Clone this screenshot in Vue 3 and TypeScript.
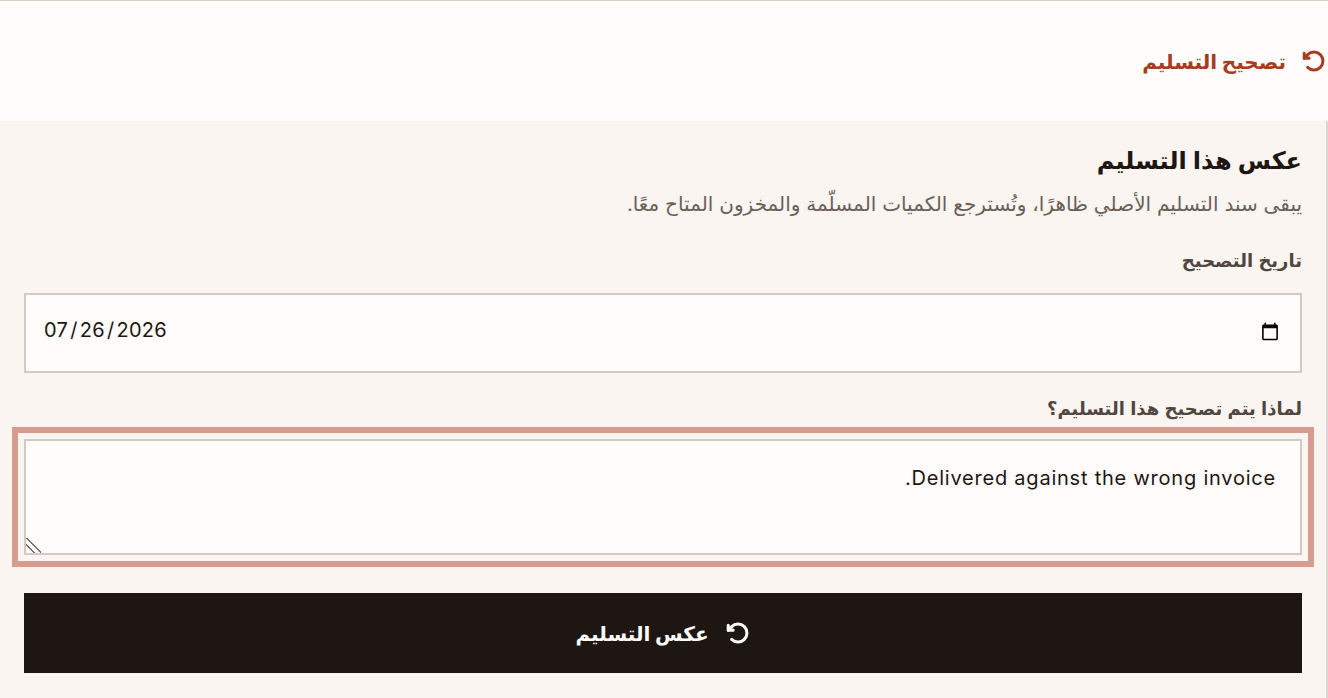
<script setup lang="ts">
const note = 'Delivered against the wrong invoice.'
const date = '2026-07-26'
</script>

<template>
  <div class="page" dir="rtl">
    <header class="top">
      <button class="link" type="button">
        <svg class="ic" viewBox="0 0 256 256" aria-hidden="true"><polyline points="79.8 99.7 31.8 99.7 31.8 51.7" /><path d="M65.8 190.2a88 88 0 1 0 0-124.4L31.8 99.7" /></svg>
        <span class="txt">تصحيح التسليم</span>
      </button>
    </header>
    <section class="panel">
      <h2>عكس هذا التسليم</h2>
      <p class="sub">يبقى سند التسليم الأصلي ظاهرًا، وتُسترجع الكميات المسلّمة والمخزون المتاح معًا.</p>
      <label class="lab" for="d">تاريخ التصحيح</label>
      <input id="d" class="field date" type="date" :value="date" />
      <label class="lab second" for="r">لماذا يتم تصحيح هذا التسليم؟</label>
      <textarea id="r" class="field area" :value="note"></textarea>
      <button class="submit" type="button">
        <svg class="ic" viewBox="0 0 256 256" aria-hidden="true"><polyline points="79.8 99.7 31.8 99.7 31.8 51.7" /><path d="M65.8 190.2a88 88 0 1 0 0-124.4L31.8 99.7" /></svg>
        <span class="txt">عكس التسليم</span>
      </button>
    </section>
  </div>
</template>

<style>
html, body { margin: 0; background: #faf5f0; overflow: hidden; }
</style>

<style scoped>
.page {
  zoom: 2;
  font-family: Inter, "DejaVu Sans", sans-serif;
  font-optical-sizing: none;
  color: #1e1613;
  height: 349px;
  background: #faf5f0;
}
.top {
  height: 60px;
  box-sizing: content-box;
  border-top: 0.5px solid #dccfc4;
  background: #fffcfb;
  display: flex;
  align-items: center;
}
.link {
  display: flex;
  align-items: center;
  gap: 7.5px;
  padding: 0;
  margin-right: 0.5px;
  border: 0;
  background: none;
  color: #a63d20;
  font: 700 10px Inter, "DejaVu Sans", sans-serif;
}
.txt { padding-top: 1px; }
.ic {
  width: 13px;
  height: 13px;
  fill: none;
  stroke: currentColor;
  stroke-width: 30;
  stroke-linecap: round;
  stroke-linejoin: round;
  flex: none;
}
.panel {
  display: flex;
  flex-direction: column;
  padding: 12px 12px 0;
  border-right: 1px solid #dcd6d0;
  height: 288.5px;
  box-sizing: border-box;
}
h2 {
  margin: 0;
  font-size: 12px;
  line-height: 16px;
  font-weight: 700;
  word-spacing: 0.25px;
}
.sub {
  margin: 6px 0 0;
  font-size: 10px;
  line-height: 15px;
  color: #6b5f58;
  word-spacing: 0.14px;
}
.lab {
  margin-top: 14px;
  font-size: 9px;
  line-height: 14px;
  font-weight: 700;
  color: #51453f;
  word-spacing: 0.5px;
}
.second { margin-top: 11px; }
.field {
  box-sizing: border-box;
  width: 100%;
  margin: 0;
  border: 1px solid #d2c9c2;
  background: #fffcfb;
  color: #1e1613;
  border-radius: 0;
  font: 400 10px Inter, "DejaVu Sans", sans-serif;
  font-optical-sizing: none;
}
.date {
  height: 40px;
  margin-top: 9px;
  padding: 0 8px 1px;
  letter-spacing: 0.15px;
}
.date::-webkit-datetime-edit {
  padding-bottom: 2px;
}
.area {
  height: 58px;
  margin-top: 8px;
  padding: 12.5px 12px 12px;
  outline: 3px solid #d89c8e;
  outline-offset: 3px;
  display: block;
  letter-spacing: 0.39px;
}
.area::-webkit-resizer {
  background: linear-gradient(45deg, transparent 0 24%, #77716c 24% 31%, transparent 31% 46%, #77716c 46% 53%, transparent 53%) left bottom / 8px 8px no-repeat;
}
.submit {
  height: 40px;
  margin-top: 19px;
  border: 0;
  background: #1e1613;
  color: #fffcfb;
  display: flex;
  align-items: center;
  justify-content: center;
  gap: 8px;
  font: 700 10px Inter, "DejaVu Sans", sans-serif;
}
</style>
